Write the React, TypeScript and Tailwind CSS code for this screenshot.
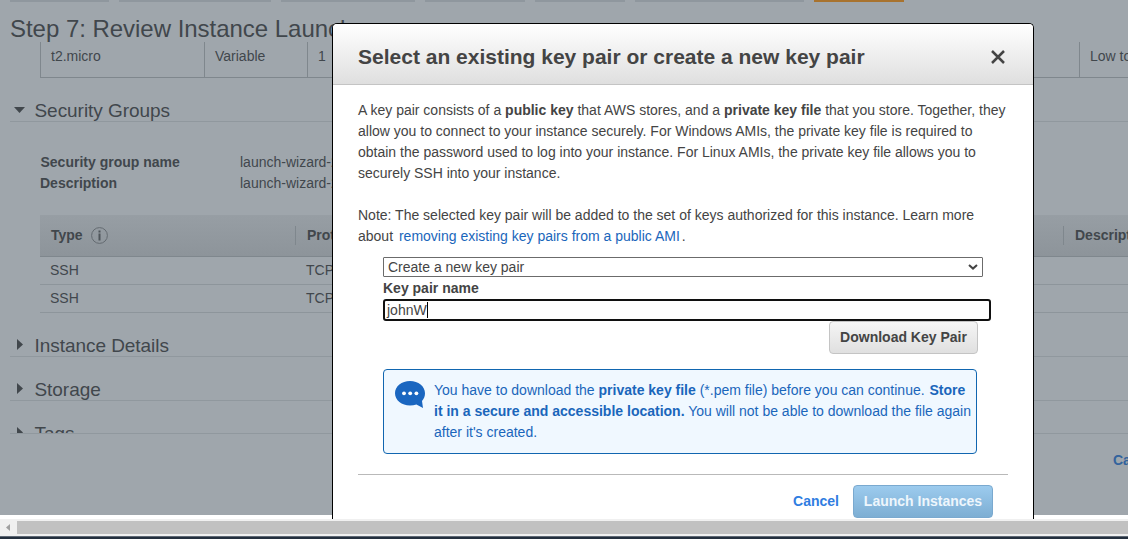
import type { ReactNode } from "react";

function Caret({ open = false }: { open?: boolean }) {
  return open ? (
    <svg className="ml-1 mr-[9.500px] mt-[9px] h-[6px] w-[11px] shrink-0" viewBox="0 0 11 6">
      <path d="M0 0h11L5.5 6z" fill="#41474c" />
    </svg>
  ) : (
    <svg className="ml-[7px] mr-[11.500px] mt-[6px] h-[11px] w-[6px] shrink-0" viewBox="0 0 6 11">
      <path d="M0 0v11l6-5.500z" fill="#41474c" />
    </svg>
  );
}

function Section({ title, open, className }: { title: string; open?: boolean; className: string }) {
  return (
    <div className={`ml-[10px] flex overflow-hidden border-b border-[#90989e] ${className}`}>
      <Caret open={open} />
      <h2 className="pt-px text-[19px] leading-[24px] tracking-[-0.05px]">{title}</h2>
    </div>
  );
}

function HeaderCell({ children, className }: { children: ReactNode; className: string }) {
  return <div className={`flex shrink-0 items-center font-bold ${className}`}>{children}</div>;
}

function ReviewPage() {
  return (
    <div className="h-[515px] overflow-hidden bg-[#9fa6ac] text-[#41474c]">
      <div className="flex h-[2px] gap-[10px] pl-[10px]">
        <div className="w-[99px] bg-[#8f979e]" />
        <div className="w-[152px] bg-[#8f979e]" />
        <div className="w-[134px] bg-[#8f979e]" />
        <div className="w-[100px] bg-[#8f979e]" />
        <div className="w-[90px] bg-[#8f979e]" />
        <div className="w-[169px] bg-[#8f979e]" />
        <div className="w-[90px] bg-[#a8732f]" />
      </div>
      <h1 className="h-[40px] pl-[10px] pt-[13px] text-[24px] leading-[28px] tracking-[-0.03px]">
        Step 7: Review Instance Launch
      </h1>
      <div className="ml-[40px] flex h-[36px] border-b border-l border-[#7f878d] leading-[28px]">
        <div className="w-[163px] shrink-0 pl-[10px]">t2.micro</div>
        <div className="w-[103px] shrink-0 border-l border-[#7f878d] pl-[10px]">Variable</div>
        <div className="w-[772px] shrink-0 border-l border-[#7f878d] pl-[10px]">1</div>
        <div className="grow whitespace-nowrap border-l border-[#7f878d] pl-[10px]">Low to Moderate</div>
      </div>
      <Section title="Security Groups" open className="mt-[20px] h-[24px]" />
      <dl className="mt-[30px] grid grid-cols-[200px_auto] pl-[40px] leading-[21px]">
        <dt className="pl-[0.500px] font-bold">Security group name</dt>
        <dd>launch-wizard-2</dd>
        <dt className="font-bold">Description</dt>
        <dd>launch-wizard-2 created</dd>
      </dl>
      <div className="ml-[40px] mt-[21px]">
        <div className="flex h-[42px] items-center border-b border-[#7f878d] bg-linear-to-b from-[#979ea4] to-[#8d949a] pl-[11px]">
          <HeaderCell className="h-[19px] w-[244px]">
            Type
            <svg className="ml-[8px] h-[17px] w-[17px]" viewBox="0 0 17 17">
              <circle cx="8.5" cy="8.5" r="7.9" fill="none" stroke="#646b71" />
              <path d="M7.500 3.500h2v2h-2zM7.500 6.500h2v7h-2z" fill="#4e555a" />
            </svg>
          </HeaderCell>
          <HeaderCell className="h-[19px] w-[768px] border-l border-[#7f878d] pl-[11px]">Protocol</HeaderCell>
          <HeaderCell className="h-[19px] border-l border-[#7f878d] pl-[11px]">Description</HeaderCell>
        </div>
        <div className="flex h-[28px] border-b border-[#8d959b] pl-[10px] leading-[27px]">
          <span className="w-[256px]">SSH</span>
          <span>TCP</span>
        </div>
        <div className="flex h-[28px] border-b border-[#8d959b] pl-[10px] leading-[27px]">
          <span className="w-[256px]">SSH</span>
          <span>TCP</span>
        </div>
      </div>
      <Section title="Instance Details" className="mt-[20px] h-[24px]" />
      <Section title="Storage" className="mt-[20px] h-[24px]" />
      <Section title="Tags" className="mt-[20px] h-[13px]" />
      <div className="flex justify-end pt-[16px] leading-[21px]">
        <a className="w-[15px] overflow-hidden font-bold text-[#33639d]">Cancel</a>
      </div>
    </div>
  );
}

function KeyPairDialog() {
  return (
    <div className="absolute left-[332px] top-[23px] h-[496px] w-[702px] overflow-hidden rounded-t-[5px] border border-b-0 border-black bg-white text-[#444]">
      <header className="flex h-[61px] items-center border-b border-[#c4c4c4] bg-linear-to-b from-white to-[#dfdfdf] pb-[3px] pl-[25px] pr-[28px] pt-[7px]">
        <h2 className="grow text-[21px] font-bold leading-[25px]">Select an existing key pair or create a new key pair</h2>
        <svg className="mt-[2px] h-[14px] w-[14px]" viewBox="0 0 14 14">
          <path d="M1 1l12 12M13 1L1 13" stroke="#444" strokeWidth="2.5" />
        </svg>
      </header>
      <div className="pl-[25px] pr-[25px] pt-[15px] leading-[21px]">
        <p className="whitespace-nowrap">
          A key pair consists of a <b>public key</b> that AWS stores, and a <b>private key file</b> that you store. Together, they
          <br />
          allow you to connect to your instance securely. For Windows AMIs, the private key file is required to
          <br />
          obtain the password used to log into your instance. For Linux AMIs, the private key file allows you to
          <br />
          securely SSH into your instance.
        </p>
        <p className="mt-[21px] whitespace-nowrap">
          Note: The selected key pair will be added to the set of keys authorized for this instance. Learn more
          <br />
          about <a className="mx-[2px] text-[#1a66bb]">removing existing key pairs from a public AMI</a>.
        </p>
        <div className="pl-[25px] pt-[10px]">
          <div className="flex h-[20px] w-[600px] items-center justify-between rounded-[1px] border border-[#6b6b6b] pl-[4px] pr-[4px]">
            <span>Create a new key pair</span>
            <svg className="h-[6px] w-[10px]" viewBox="0 0 10 6">
              <path d="M1 1l4 3.6L9 1" fill="none" stroke="#444" strokeWidth="2" />
            </svg>
          </div>
          <div className="font-bold leading-[22px]">Key pair name</div>
          <div className="flex h-[22px] w-[608px] items-center rounded-[3px] border-2 border-[#101010] pl-[2px] leading-[18px]">
            johnW
            <span className="h-[16px] w-px bg-black" />
          </div>
          <div className="flex w-[595px] justify-end">
            <button className="h-[33px] w-[149px] rounded-[4px] border border-[#c4c4c4] bg-linear-to-b from-[#f5f5f5] to-[#e0e0e0] pb-px font-bold">
              Download Key Pair
            </button>
          </div>
          <div className="mt-[15px] flex h-[85px] w-[594px] rounded-[4px] border border-[#1166b0] bg-[#f0f8ff] pl-[11px] pt-[10px] text-[#1a66bb]">
            <svg className="mr-[9px] mt-[1px] h-[27px] w-[30px] shrink-0" viewBox="0 0 30 27">
              <path d="M15 0C6.700 0 0 5.300 0 12.300S6.700 24.500 15 24.500c2.300 0 4.500-.4 6.400-1.100L28 27l-1-7c1.900-2.100 3-4.700 3-7.700C30 5.300 23.300 0 15 0z" fill="#1a66c0" />
              <circle cx="9" cy="12.300" r="1.900" fill="#fff" />
              <circle cx="15.200" cy="12.300" r="1.900" fill="#fff" />
              <circle cx="21.400" cy="12.300" r="1.900" fill="#fff" />
            </svg>
            <p className="whitespace-nowrap">
              You have to download the <b>private key file</b> (*.pem file) before you can continue. <b className="ml-px">Store</b>
              <br />
              <b>it in a secure and accessible location.</b> You will not be able to download the file again
              <br />
              after it's created.
            </p>
          </div>
        </div>
        <footer className="mt-[20px] flex items-center justify-end border-t border-[#b9b9b9] pr-[15px] pt-[10px] font-bold">
          <a className="mr-[14px] text-[#2f7de1]">Cancel</a>
          <button className="h-[33px] w-[140px] rounded-[4px] border border-[#7aa9cf] bg-linear-to-b from-[#9ccbee] to-[#7daed3] text-[#eef6fc]">
            Launch Instances
          </button>
        </footer>
      </div>
    </div>
  );
}

export default function App() {
  return (
    <div className="relative flex h-[539px] w-[1128px] flex-col overflow-hidden bg-white font-['Liberation_Sans',Arial,sans-serif] text-[14px]">
      <ReviewPage />
      <div className="h-[4px]" />
      <div className="flex h-[17px] bg-[#f0f0f0]">
        <div className="flex w-[17px] items-center pl-[6px]">
          <svg className="h-[7px] w-[4px]" viewBox="0 0 4 7">
            <path d="M4 0v7L0 3.500z" fill="#a0a0a0" />
          </svg>
        </div>
        <div className="my-[2px] grow bg-[#c1c1c1]" />
      </div>
      <div className="h-[3px] border-t border-[#5f6975] bg-[#232f3e]" />
      <KeyPairDialog />
    </div>
  );
}
